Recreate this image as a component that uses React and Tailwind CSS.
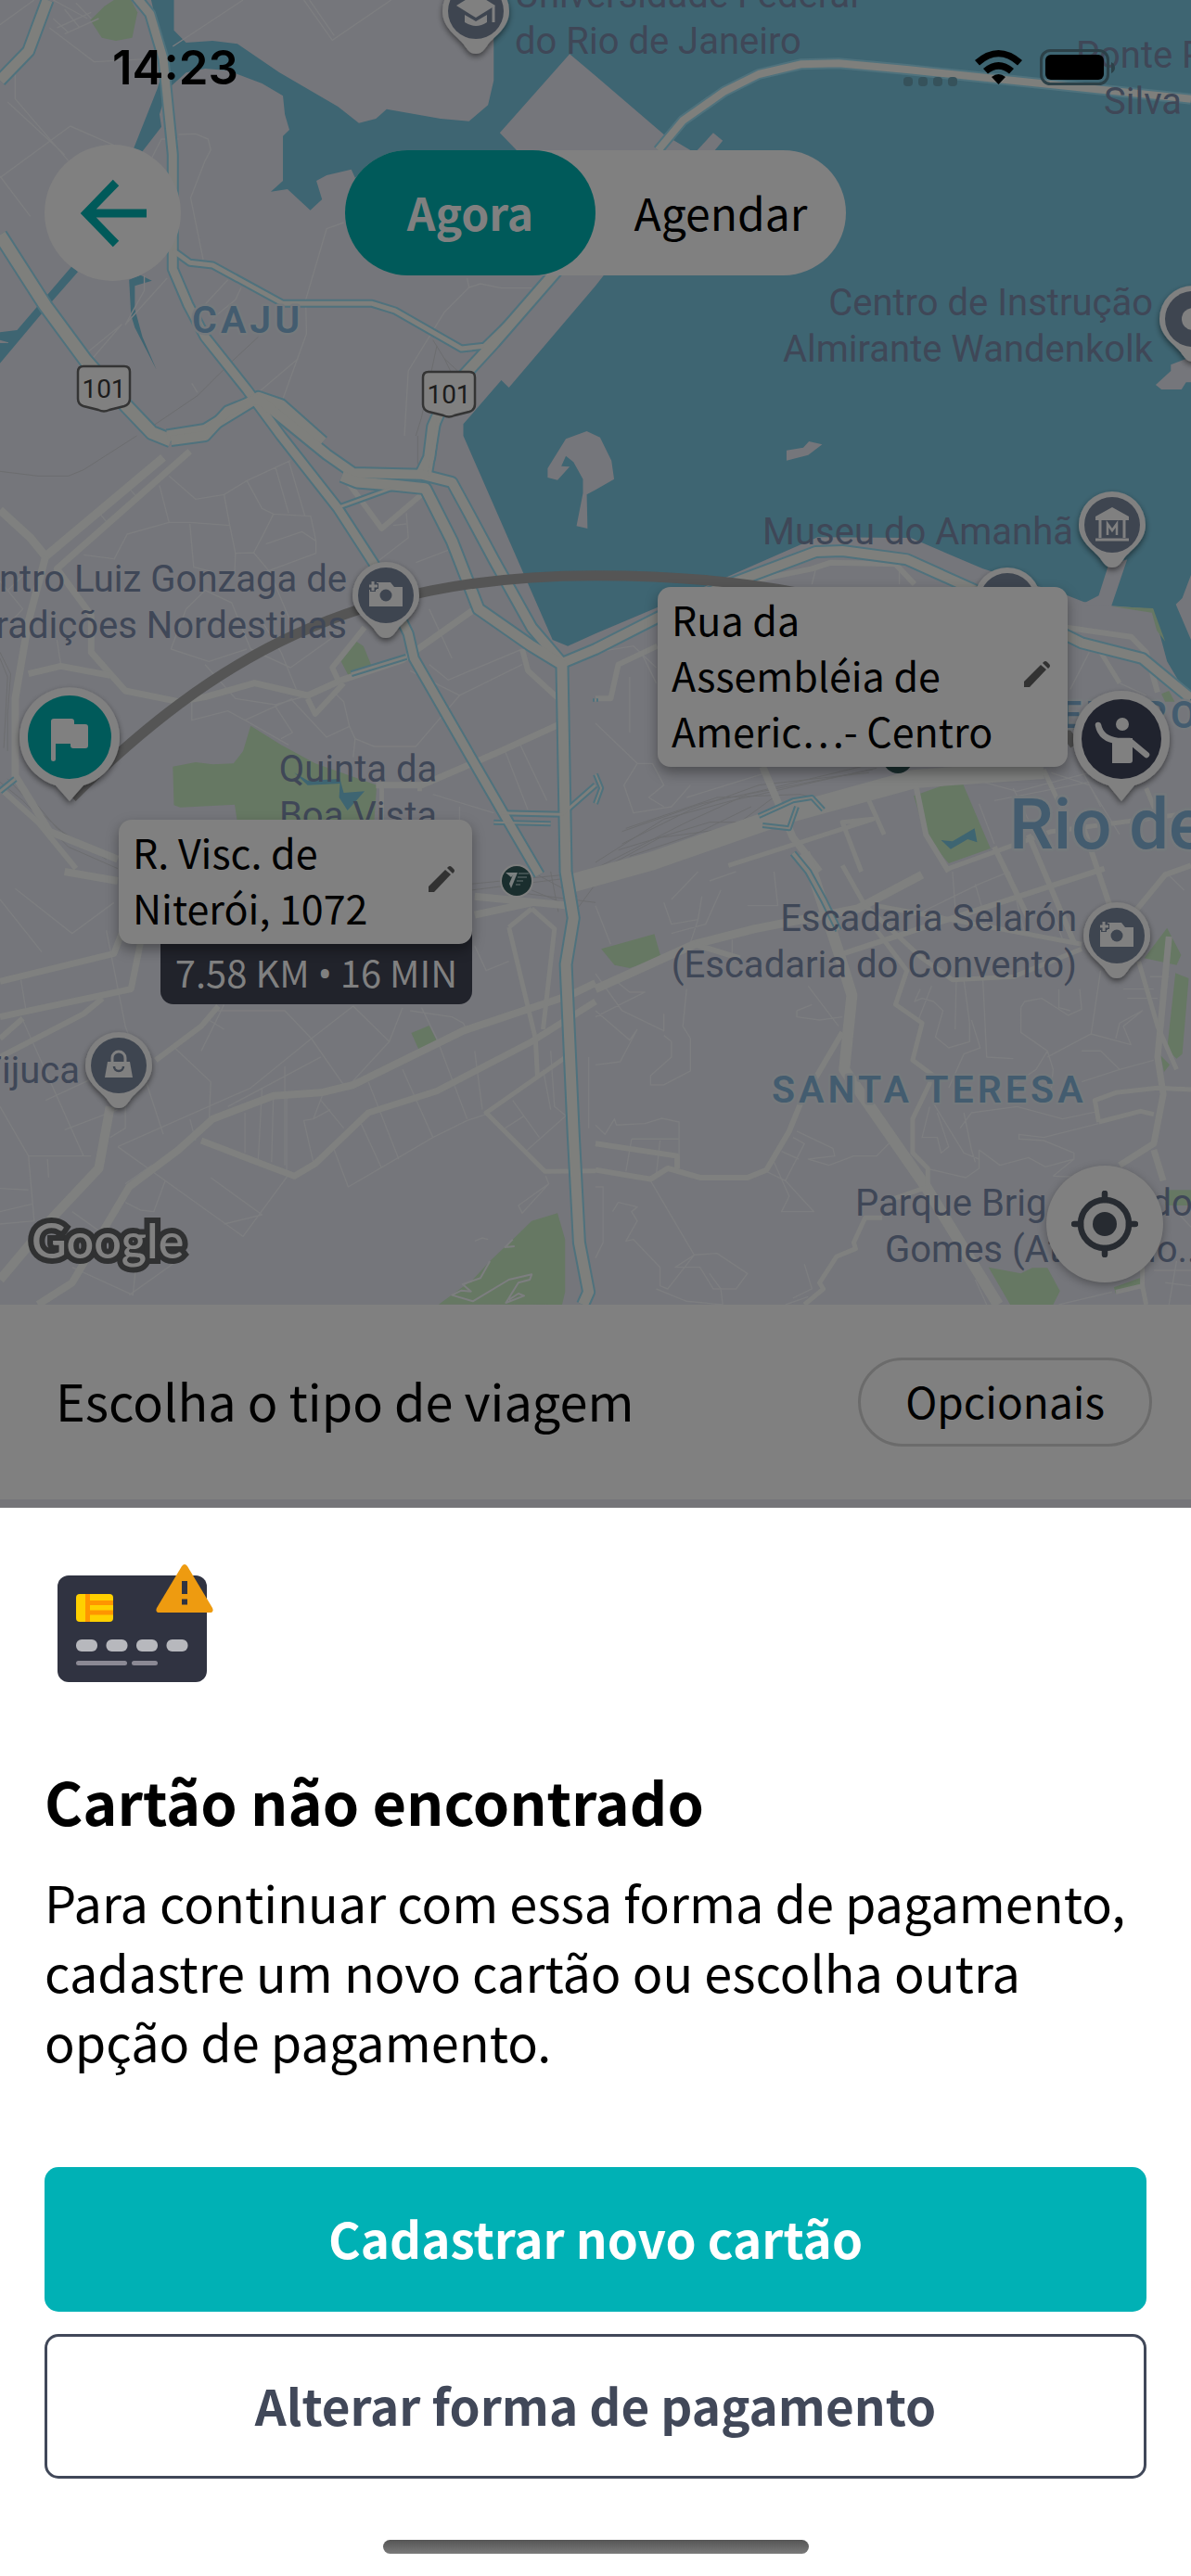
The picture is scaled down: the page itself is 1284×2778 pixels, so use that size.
import React from "react";

/* Map sheet units: every terrain layer is drawn on a grid of six tiles. */
const TILE = {
  nw: "translate(0 0)",
  ne: "translate(1568 0)",
  w: "translate(0 1410)",
  e: "translate(1568 1410)",
  sw: "translate(0 2820)",
  se: "translate(1568 2820)",
};

const WATER = [
  ["nw", "M398 0H458V98L490 138L560 132L625 142L735 234L890 345L945 398L990 384L1018 353L1160 384L1235 392L1285 340L1300 260V0H3136V2270L3073 2140L3036 1970L2926 1960L2853 1947L2808 1925L2588 1840L2398 1740L2153 1738L1731 1965L1568 2050L1495 2090L1455 2070L1220 1410V1372L1320 1230L1340 1254L1568 925L1590 890L1400 700L950 560L935 575L925 548L860 567L833 585L848 645L817 680L757 612L713 620L745 585V440L762 420L750 370L745 310L690 270L600 228L540 222L490 235L440 290L420 370L425 410L375 490L352 480L415 285L435 200Z"],
  ["nw", "M190 860L205 880L130 985L0 1175V1110H22V1108L0 1100V1075L45 1068Z"],
  ["nw", "M340 905L370 890L400 908L355 925V1000L375 1090L412 1196L355 1060L345 1020Z"],
];
const LAND = [
  ["nw", "M1316 430L1500 175L1568 245L1748 435L1818 486L1700 600H1450Z"],
  ["ne", "M268 486L310 430L335 455L305 500Z"],
  ["e", "M503 47L547 38L562 18L597 28L560 62L503 80Z"],
  ["w", "M1490 10L1545 -15L1580 5L1610 80L1617 140L1568 175L1545 190L1547 300L1518 292L1535 185V140L1510 85L1490 65L1478 98L1500 100L1468 143L1442 135V105Z"],
  ["e", "M1350 420L1400 400L1358 552L1280 545L1325 517Z"],
  ["e", "M1568 450L1545 525L1528 545L1568 660Z"],
  ["ne", "M1568 1155L1515 1180V1200L1475 1245L1490 1260H1543L1555 1237H1568Z"],
];
const GREEN = [
  ["nw", "M238 65L275 20L300 0H345L362 40L348 122L305 132L268 122Z"],
  ["w", "M898 730L938 665L957 680L977 740L918 777Z"],
  ["w", "M455 1070L515 1056L560 1063L615 1060L640 1020L660 938L740 1000L830 1060L992 1130L985 1250H625L618 1193L475 1202L458 1195Z"],
  ["e", "M838 1165L962 1110L1040 1335L930 1383L870 1295Z"],
  ["e", "M1360 552L1468 558L1500 665L1478 630L1465 572Z"],
  ["e", "M1490 835L1510 825L1525 860H1500Z"],
  ["e", "M448 1230L475 1225L470 1250L450 1255Z"],
  ["sw", "M1083 522L1130 498L1150 547L1103 577Z"],
  ["sw", "M1155 1400L1245 1320L1290 1260L1350 1190L1400 1130L1468 1105L1488 1190V1360L1480 1401Z"],
  ["se", "M15 250L155 202L173 280L90 312L50 302Z"],
  ["se", "M1445 280L1505 182L1542 270L1530 302Z"],
  ["se", "M1527 328L1562 345L1545 590L1530 605L1505 575Z"],
  ["se", "M1488 595L1512 625L1497 648Z"],
  ["se", "M1035 1280L1120 1300L1150 1282H1190L1223 1357L1205 1401H1092Z"],
  ["se", "M1365 1345L1440 1312V1345L1370 1365Z"],
  ["se", "M1500 1030H1568V1080H1500Z"],
];
const LAKES = [
  ["w", "M775 1090L810 1115L895 1110L905 1155L960 1150L915 1212L893 1170L895 1125L810 1130Z"],
  ["e", "M910 1308L940 1312L998 1270L1005 1315L980 1305L935 1337Z"],
];
const HIGHWAYS = [
  ["nw", "M125 0L75 165L0 260", 11],
  ["nw", "M345 -30L395 45L430 190L455 500V870L495 985L540 1090L650 1260L740 1410L890 1645L985 1825L1075 2050L1090 2130L1240 2450L1320 2620L1420 2830", 9],
  ["nw", "M0 760L120 990L225 1165L330 1310L400 1400L450 1425", 13],
  ["nw", "M455 810L500 850L560 858L745 982H980L1040 1005L1215 1128L1275 1120L1350 1030L1455 880", 5],
  ["nw", "M1470 870L1300 1110L1180 1270L1140 1380L1130 1480L1110 1530", 11],
  ["nw", "M440 1410L540 1390L680 1285L740 1310L850 1430", 11],
  ["ne", "M165 486L230 390L340 295L430 240L540 208L640 205L820 225L1568 320", 8],
  ["w", "M450 15L540 0L600 -80L680 -120L740 -60L860 60L930 120L1110 125L1190 150L1230 240L1300 400L1400 620L1480 735L1568 690L1728 590L1898 490L2148 375L2218 372L2388 400L2568 500L2848 670L3008 720L3136 850", 10],
  ["w", "M900 130L940 150L1040 160L1120 170L1190 340L1260 560L1400 680L1480 740L1490 1410L1510 1560L1490 1710L1510 2260L1525 2610L1550 2770L1535 2811", 11],
  ["w", "M895 230L1030 170", 3],
  ["w", "M1155 -60L1130 130", 4],
  ["w", "M925 770L1070 715", 3],
  ["w", "M1300 1250L1450 1255", 2],
  ["w", "M1320 1220L1480 1225L1568 1130", 3],
  ["w", "M0 1150L40 1110", 3],
  ["e", "M0 860V850M0 1190L15 1140L0 1095", 2],
  ["e", "M430 1230L520 1180L570 1170L600 1210M440 1260L510 1270L530 1200", 2],
  ["e", "M520 1350L560 1410L600 1500L640 1600", 4],
];
const ROADS = [
  ["w", "M430 70L120 390L80 330L0 240", 9],
  ["w", "M500 50L150 430L240 580V700L330 825L470 860L540 845L670 800L810 840L900 790L1060 725L1250 560", 7],
  ["w", "M120 390L75 600L40 850V1100L130 1280L310 1370", 8],
  ["w", "M75 770L160 745L290 775", 7],
  ["w", "M890 790L875 750L960 620", 6],
  ["w", "M810 850L830 900L905 800", 6],
  ["w", "M910 140L1005 300L1110 190", 6],
  ["w", "M990 1130H1110L1300 1030L1470 935", 7],
  ["w", "M1375 690L1390 760L1470 850", 6],
  ["w", "M1005 1120V1250M1105 1130V1150", 5],
  ["w", "M0 1140L100 1250L200 1400", 6],
  ["sw", "M0 355L300 265L320 200", 7],
  ["sw", "M0 470L345 380L370 230", 7],
  ["sw", "M0 600L220 460L270 410M0 540L60 475", 6],
  ["sw", "M575 435L530 500L410 610", 6],
  ["sw", "M290 760L260 960L130 1130L0 1320", 10],
  ["sw", "M100 1401L190 1330L340 1020L470 900L560 800L720 725L845 715L930 690L1220 515L1500 400L1568 360", 8],
  ["sw", "M530 870L700 950L775 985L830 945L970 780L1150 710L1400 550L1568 420", 7],
  ["sw", "M1340 180L1410 540L1415 660M1400 120L1460 185L1430 510M1340 180L1400 120", 5],
  ["sw", "M1490 600L1280 780L1435 970L1568 968", 5],
  ["sw", "M1250 80L1500 110M1250 140L1400 100", 8],
  ["sw", "M170 0L310 30", 8],
  ["e", "M-70 1450L150 1375L500 1225L840 1110L1180 1080", 20],
  ["e", "M440 1070L520 1300L590 1410", 8],
  ["se", "M550 -60L570 0L640 260L675 400L655 640L870 1020L1060 1401", 12],
  ["se", "M0 380L260 235L420 185L690 120L860 10", 9],
  ["se", "M260 235L380 280M640 270L1340 -10", 6],
  ["se", "M650 -20L710 110L860 280L940 350L1100 340L1280 250", 5],
  ["se", "M740 110L1280 235", 5],
  ["se", "M740 190L820 320L790 430L860 490L835 610L890 660L835 800V910L875 960V1020L780 1060", 5],
  ["se", "M650 520L540 750L510 840L450 965L400 990H275L190 960L145 995L0 965", 6],
  ["se", "M0 880L215 920V960", 6],
  ["se", "M755 1120H710L680 1200L685 1220L635 1245L590 1330L600 1350L550 1401", 5],
  ["se", "M1510 210L1480 600L1495 720L1470 880L1380 950M1470 900L1495 1000", 7],
  ["e", "M1050 1330L1140 1560M1140 1290L1260 1640M1280 1250L1365 1560", 6],
  ["se", "M1400 160L1500 10L1568 -20", 6],
  ["se", "M1430 290L1480 500L1530 640M1325 810L1315 740L1370 715L1480 700L1568 705", 5],
  ["se", "M1325 810L1435 775L1470 785M1370 1360L1440 1340L1450 1401M1440 1350V1250", 5],
  ["e", "M840 1110L870 1290L930 1410", 6],
  ["e", "M0 850H40L60 740L163 680", 6],
  ["e", "M370 480L570 430L620 410L790 415L840 480", 6],
  ["e", "M350 1390L730 1240L650 1250L700 1410M720 1180L760 1290", 5],
  ["e", "M1240 620L1410 650L1450 700L1480 830", 6],
  ["e", "M1180 1080L1240 1240M930 1400L1200 1280L1568 1220M1320 680L1380 800M1450 1140L1490 1260", 5],
];
const STREETS = [
  ["nw", "M0 80L90 0M140 0L230 60M150 90L240 40M170 110L260 60M140 60L180 105M170 30L210 90M200 10L240 60M130 90L248 200L400 190M100 60L40 230V320L180 520M0 575L185 408L310 475M80 700L0 570M20 330L170 500"],
  ["nw", "M455 150L640 0M800 0L875 130L1030 0M815 0L880 115M470 435L515 433L548 450L555 485L540 520L502 640L535 840M400 510L425 450L470 450M600 905L540 985M635 930L620 970L560 1030M905 720L860 740L805 970L807 1080L745 1290M1230 900L1235 930L1170 1010L1075 1200L1065 1410M1235 930L1265 918L1320 932H1400M230 1140L320 1050L240 1165M380 890V940L330 1050L440 900M785 1160L680 1270M520 1270L505 1240"],
  ["w", "M445 130L515 205L590 190L650 145L765 80M650 145L690 235L720 253L818 260L832 340V380L700 440M590 190L605 290L620 380L618 440M420 160L445 280L335 318L300 400M445 280H500L605 290M500 285L510 425L560 440M620 380L668 378L693 320L720 253M700 350L795 310L832 340M668 378L710 440L765 600M340 170L365 205M265 255L285 285M725 100L760 250M760 80L803 260M1070 250L1075 330L980 420M1035 290L1070 285M1095 410L1180 370"],
  ["w", "M450 690L490 560L540 500L610 540L660 690L765 750L890 640M450 690L550 730L650 690M540 740L620 850L725 870L810 840M505 840V920L600 890L645 920L770 850M645 920L760 1000M725 875L770 960L740 980M765 850L860 975L920 940L905 860L880 830M690 600L740 700L780 820M0 470L60 560L30 600M20 500L70 440M930 1040L935 980L985 1005H1095L1210 840L1375 740M935 980L920 940M1130 740L1180 790L1375 690M1080 760L1210 840M1330 1020L1390 1210M1370 1000L1440 1180M1210 1200V1300M1140 1160L1300 1220M220 385L300 398M150 660L160 740M1130 560L1190 720"],
  ["sw", "M0 90L110 260M40 55L190 200L300 100M55 350L70 460M280 190L330 500L390 700L430 850M60 480L220 920M0 760L75 920H240M75 920L90 1130L0 1140M125 930L128 990M120 740L330 620M170 835L310 770M330 760V830L290 860M560 450L750 450L820 540L905 690M930 435L820 540L660 700L420 830L310 890M930 435L1025 550L920 690M1025 550L1060 440M1080 450L1190 470L1220 490L1230 515M1110 440L1150 540L1230 800M460 570L555 680L550 820M550 480L590 510M590 430L530 580M750 630V950M690 700L680 930M645 780V910M720 720L715 940M755 720V980M845 600L600 760M850 720L825 800L800 805L825 940M845 740L905 830M825 800L870 770"],
  ["sw", "M970 680L1050 930M1060 640L1140 860M945 800L1005 960M880 900L917 1020L1140 860L1230 805L1280 785M917 1020M310 890L640 1180L760 980M555 990L690 1110L590 1140M435 1000L405 1100L370 1095L330 1070M330 1010L400 950M500 800L515 870M190 1100L360 1250L350 1370L190 1280M0 1025L75 1030M0 1100L85 1075M1350 740L1420 860M1330 830L1380 790M1380 910L1490 790M1450 580L1460 760L1490 790M1430 640L1450 770M1437 985L1445 1010L1365 1080L1375 1105L1445 1010M1250 1195L1270 1185L1285 1190M340 1370L500 1230M1550 600V830M1250 240L1280 320L1340 290M1250 580L1270 770"],
  ["e", "M0 700L100 680L160 750M90 780V960M120 700L160 800M0 930L110 1060L75 1130L100 1220L200 1200L250 1130M110 1060L150 1060L180 1130L140 1170L180 1200M240 1170L450 1090M800 420V480M580 430L570 480M1300 700L1250 820M1380 800L1450 840M1010 1190L1050 1320M1100 1140L1170 1320M1200 1090L1300 1130L1380 1290M1280 1080L1330 1200M960 1100L1110 1150L1300 1090M720 1180L740 1120L850 1090M1050 1180L1300 1120"],
  ["se", "M0 110L40 235M200 90L270 0M180 100L200 170L270 155L280 80M270 155L250 230M330 60L290 170L200 200M370 0L300 30M360 220V280M470 0L480 110L400 110M940 0L950 160M1000 40L1030 170M860 130L1010 40L1090 0M1090 0L1130 200M900 170L1180 60M1200 120L1230 220M950 350L947 510M970 350L985 490V550L930 570L895 535L915 450L890 420L860 410L840 420L855 380M1020 350L1030 600L1100 605M885 370L850 480M990 480L1013 570L970 590L930 700M1120 440L1130 420L1175 410L1245 465L1280 445L1275 380M1120 440V520L1190 580L1160 640L1100 690M1190 580L1205 640L1200 700M1330 320L1305 525L1190 600M1305 525L1410 560L1390 500L1440 450L1380 490L1370 540M1280 580H1330L1380 640L1470 610M1380 640L1280 680M1220 380V440L1250 450"],
  ["se", "M0 330L70 450L180 515V460M110 510L65 615L0 625M180 530L200 550V600L145 660V690L180 690L250 645V540L230 500L240 380M0 470L130 390L90 390L50 350M0 450L90 545L110 510M0 820L25 850L50 800L55 820L130 815L175 798L220 810V920M95 865L220 865M95 865L80 970M170 870L160 980M530 840L625 895L630 920L560 930L615 950L680 920H740L780 870M520 860L550 880L500 1000L450 970M500 1000L575 1100H490L510 1050L470 940M490 905L535 930M145 1000L260 1240L320 1235L400 1300L370 1350L310 1350L275 1280H210L260 1240M260 1240L190 1350L170 1340V1280L100 1190L80 1195L110 1130L95 1100L110 1085L60 1070L45 1100M0 1020H20V1200L0 1250M880 760L860 860L900 860L910 910L930 890L900 780M890 750L970 910L1010 930M970 780L990 900L1000 940M960 830L990 780L1110 760L1230 800L1325 775"],
  ["se", "M1010 900L1065 950L1140 925L1185 955L1260 930V910L1180 870L1115 865V850L1180 860L1325 815M1205 985L1260 930M1205 985L1300 990M870 960L975 990L1010 960V900M530 450V470L590 480L650 470M530 450L570 430M560 370L640 500M1220 1401L1360 1360M1500 0L1550 60M1460 340H1510M1400 410H1480M1390 380L1470 380M1530 1100L1568 1150M1470 1290H1568M1500 1330L1568 1340M1530 1260L1510 1401M500 1401L560 1375M550 1270L570 1350L520 1380M1000 1320L1030 1401M160 1350L240 1390L335 1401L330 1350L300 1300"],
];
const TRAILS = [
  ["sw", "M1350 1190L1330 1215L1355 1212M1290 1260L1265 1315L1218 1335L1240 1358L1215 1355L1190 1370L1245 1390L1340 1320L1400 1303L1395 1320L1365 1330L1332 1395L1380 1372L1365 1365L1340 1385"],
];
const RAILS = [
  ["w", "M0 115L100 130H180L220 110L360 0"],
  ["nw", "M680 1090L610 1170L520 1280L400 1380M1140 1100L1170 1160L1190 1210M1150 1120L1110 1350L1095 1410M1170 1160L1205 1200M1100 1410V1500L1120 1530"],
  ["w", "M0 720L20 780L10 1010M0 700L28 770L20 900V1020M0 1120L60 1180L180 1330L310 1400M20 1110L90 1200L200 1320L300 1370M40 1110L150 1270L280 1370"],
  ["e", "M70 1280L280 1190L430 1150L700 1070M80 1270L320 1170L540 1160L610 1180M0 1380L180 1240L360 1180L740 1075M70 1320L250 1210L430 1130L720 1090M60 1340L300 1250L380 1250L480 1160M100 1400L350 1280L430 1240M0 1400L240 1250L400 1160L730 1080M20 1400L170 1300L350 1270M90 1360L260 1290L410 1200"],
  ["sw", "M1240 40L1568 0M1240 60L1568 10M1380 70L1568 100M1400 60L1520 120L1568 40M1450 0L1470 130M1400 0L1520 80"],
];

const Fill = ({ list, color }) =>
  list.map(([t, d], i) => <path key={i} transform={TILE[t]} d={d} fill={color} />);
const Line = ({ list, color, width = 0, extra = 0 }) =>
  list.map(([t, d, w], i) => (
    <path key={i} transform={TILE[t]} d={d} fill="none" stroke={color} strokeWidth={(w || width) + extra}
      strokeLinejoin="round" strokeLinecap="butt" vectorEffect="non-scaling-stroke" />
  ));

const Poi = ({ x, y, children }) => (
  <g transform={`translate(${x} ${y})`}>
    <path d="M0 46C-6 46 -9 42 -13 36C-20 27 -36 18 -36 0A36 36 0 1 1 36 0C36 18 20 27 13 36C9 42 6 46 0 46Z" fill="#808080" filter="url(#soft)" />
    <circle r="30" fill="#3e4550" />
    {children}
  </g>
);
const Camera = () => (
  <g>
    <path d="M-18 12V-6H-10V-14H5L9 -9H18V12Z" fill="#808080" />
    <circle r="6.500" cy="0" fill="#3e4550" />
    <path d="M-14 -16V-4M-19 -10H-8" stroke="#3e4550" strokeWidth="6" />
    <path d="M-14 -15V-5M-18 -10H-9" stroke="#808080" strokeWidth="3" />
  </g>
);
const Shield = ({ x, y }) => (
  <g transform={`translate(${x} ${y})`}>
    <path d="M-22 -24H22Q28 -24 28 -18V11Q28 17 22 19L6 23Q0 26 -6 23L-22 19Q-28 17 -28 11V-18Q-28 -24 -22 -24Z" fill="#808080" stroke="#343434" strokeWidth="2.500" />
    <text y="10" textAnchor="middle" fontSize="28" fill="#1c1c1c">101</text>
  </g>
);

const PLACE_LABELS = [
  [555, 8, "start", "Universidade Federal"],
  [555, 58, "start", "do Rio de Janeiro"],
  [1160, 73, "start", "Ponte Pres."],
  [1190, 123, "start", "Silva"],
  [1243, 340, "end", "Centro de Instrução"],
  [1243, 390, "end", "Almirante Wandenkolk"],
  [374, 638, "end", "Centro Luiz Gonzaga de"],
  [374, 688, "end", "Tradições Nordestinas"],
  [1157, 587, "end", "Museu do Amanhã"],
  [386, 843, "middle", "Quinta da"],
  [386, 893, "middle", "Boa Vista"],
  [1161, 1004, "end", "Escadaria Selarón"],
  [1161, 1054, "end", "(Escadaria do Convento)"],
  [86, 1168, "end", "Tijuca"],
  [922, 1311, "start", "Parque Brig Eduardo"],
  [954, 1361, "start", "Gomes (Aterro do..."],
];

function CityMap() {
  return (
    <svg className="absolute inset-0 h-full w-full bg-[#75767b] font-['Roboto',sans-serif]" viewBox="0 0 1284 1407" preserveAspectRatio="xMidYMin slice" role="img" aria-label="Mapa do Rio de Janeiro">
      <defs>
        <filter id="soft" x="-30%" y="-30%" width="160%" height="160%">
          <feDropShadow dx="0" dy="3" stdDeviation="3" floodColor="#000" floodOpacity="0.5" />
        </filter>
      </defs>
      <g transform="scale(0.40944 0.33333)">
        <Fill list={WATER} color="#3e6572" />
        <Fill list={LAND} color="#75767b" />
        <Fill list={GREEN} color="#667863" />
        <Fill list={LAKES} color="#3e6572" />
        <Line list={RAILS} color="#6c6d6f" width={1} />
        <Line list={STREETS} color="#7d7e80" width={1} extra={0.4} />
        <Line list={TRAILS} color="#7d7e80" width={2} />
        <Line list={ROADS} color="#7f807f" />
        <Line list={HIGHWAYS} color="#4f727d" extra={4} />
        <Line list={HIGHWAYS} color="#7e7f7c" extra={0} />
        <path d="M190 2580C560 2130 930 1862 1568 1862C2100 1862 2600 2000 2830 2410" fill="none" stroke="#555" strokeWidth="11" vectorEffect="non-scaling-stroke" />
      </g>

      <Shield x={112} y={419} />
      <Shield x={484} y={425} />

      <g fontSize="40" fill="#3f4757">
        {PLACE_LABELS.map(([x, y, anchor, text]) => (
          <text key={text} x={x} y={y} textAnchor={anchor}>{text}</text>
        ))}
      </g>
      <g fontSize="41" fontWeight="600" fill="#435c6f" stroke="#75797c" strokeWidth="5" strokeLinejoin="round" paintOrder="stroke" className="tracking-widest">
        <text x="207" y="359">CAJU</text>
        <text x="832" y="1189">SANTA TERESA</text>
        <text x="1112" y="785">CENTRO</text>
      </g>
      <text x="1088" y="915" fontSize="76" fontWeight="500" fill="#435c6f" stroke="#75797c" strokeWidth="6" strokeLinejoin="round" paintOrder="stroke">Rio de Janeiro</text>

      <Poi x={513} y={12}>
        <path d="M-21 -6L0 -19L21 -6L0 7Z" fill="#808080" />
        <path d="M-12 4L0 11L12 4V12Q0 20 -12 12Z" fill="#808080" />
        <path d="M19 -6V12" stroke="#808080" strokeWidth="3" />
      </Poi>
      <Poi x={1286} y={344}><circle r="12" fill="#808080" /></Poi>
      <Poi x={1086} y={648}><path d="M-11 -15V10M0 -15V10M11 -15V10" stroke="#808080" strokeWidth="6" /></Poi>
      <Poi x={1199} y={566}>
        <path d="M-18 -5V-9L0 -19L18 -9V-5Z" fill="#808080" />
        <path d="M-13 -6V14M13 -6V14M-18 16H18" stroke="#808080" strokeWidth="3" />
        <path d="M-5 11V-1L0 6L5 -1V11" fill="none" stroke="#808080" strokeWidth="2.500" />
      </Poi>
      <Poi x={416} y={642}><Camera /></Poi>
      <Poi x={1204} y={1009}><Camera /></Poi>
      <Poi x={128} y={1149}>
        <path d="M-12 -4H12L15 13H-15Z" fill="#808080" />
        <path d="M-7 -4V-8A7 7 0 0 1 7 -8V-4" fill="none" stroke="#808080" strokeWidth="3" />
        <path d="M-5 1A5 5 0 0 0 5 1" fill="none" stroke="#3e4550" strokeWidth="2.500" />
      </Poi>

      <g>
        <circle cx="557" cy="950" r="18" fill="#808080" />
        <circle cx="557" cy="950" r="16" fill="#1a2e2e" />
        <path d="M545 941H556L551 946Z" fill="#7b8080" />
        <path d="M558 941L551 958L549 953L554 941Z" fill="#7b8080" />
        <path d="M559 942H570M558 946H568M557 950H564M556 954H561" stroke="#4d5c5c" strokeWidth="1.500" />
        <circle cx="968" cy="818" r="16" fill="#1a2e2e" />
      </g>

      <g transform="translate(75 795)">
        <path d="M0 69L-15 52A54 54 0 1 1 15 52Z" fill="#808080" filter="url(#soft)" />
        <circle r="45" fill="#005a5a" />
        <path d="M-20 -17Q-20 -20 -17 -20H2Q5 -20 5 -17V-14H17Q20 -14 20 -11V9Q20 12 17 12H4Q1 12 1 9V7H-15V24Q-15 26 -17.500 26T-20 24Z" fill="#808080" />
      </g>
      <g transform="translate(1209 797)">
        <path d="M0 67L-14 50A52 52 0 1 1 14 50Z" fill="#808080" filter="url(#soft)" />
        <circle r="43" fill="#20232e" />
        <circle cx="1" cy="-16" r="7" fill="#808080" />
        <path d="M-25 -15Q-22 0 -4 2H9L27 17" fill="none" stroke="#808080" strokeWidth="6.500" strokeLinecap="round" strokeLinejoin="round" />
        <path d="M-10 -1H12V23Q12 26 9 26H-10Z" fill="#808080" />
      </g>

      <text x="34" y="1357" fontSize="52" fontWeight="600" fill="#808080" stroke="#303132" strokeWidth="12" paintOrder="stroke" className="font-['Lato',sans-serif]">Google</text>
    </svg>
  );
}

const Pencil = () => (
  <svg className="h-[30px] w-[30px] shrink-0" viewBox="0 0 30 30" aria-hidden="true">
    <path d="M1 23L19 5L25 10L7 29H1Z" fill="#323232" />
    <path d="M21 3L22 2Q24 0 26 2L28 4Q30 6 28 8L27 9Z" fill="#323232" />
  </svg>
);

function StatusBar() {
  return (
    <div className="flex items-center justify-between pt-[43px] pr-[82px] pl-[121px] text-black">
      <span className="font-['Inter',sans-serif] text-[51px] leading-[60px] font-semibold">14:23</span>
      <div className="flex items-center gap-[19px]">
        <svg className="h-[10px] w-[58px] self-end" viewBox="0 0 58 10" aria-hidden="true">
          {[0, 16, 32, 48].map((x) => <rect key={x} x={x} width="10" height="10" rx="4" fill="#36525b" />)}
        </svg>
        <svg className="h-[38px] w-[51px]" viewBox="0 0 51 38" aria-hidden="true">
          <path d="M0 11Q25.500 -11 51 11L46 16.500Q25.500 -2 5 16.500ZM9 20Q25.500 6 42 20L37 25.500Q25.500 16 14 25.500ZM18 29Q25.500 23 33 29L25.500 37Z" fill="#000" />
        </svg>
        <svg className="h-10 w-[81px]" viewBox="0 0 81 40" aria-hidden="true">
          <rect x="1.500" y="1.500" width="72" height="36" rx="10" fill="none" stroke="#2c4148" strokeWidth="3" />
          <rect x="6" y="6" width="63" height="27" rx="6" fill="#000" />
          <path d="M77 14Q81 16 81 20T77 26Z" fill="#2c4148" />
        </svg>
      </div>
    </div>
  );
}

function AddressCard({ lines, className }) {
  return (
    <button type="button" className={"absolute flex items-center justify-between rounded-[14px] bg-[#808080] pt-1 pr-[18px] pb-2.5 text-left text-[43px] leading-[60px] text-black shadow-[0_6px_14px_rgba(0,0,0,0.35)] " + className}>
      <span>
        {lines.map((line) => <span key={line} className="block whitespace-nowrap">{line}</span>)}
      </span>
      <Pencil />
    </button>
  );
}

function MapArea() {
  return (
    <section className="relative min-h-[1200px] flex-1 overflow-hidden">
      <CityMap />
      <div className="relative">
        <StatusBar />
        <nav className="relative mt-[53px] flex h-[147px] items-center justify-center">
          <button type="button" aria-label="Voltar" className="absolute left-12 flex h-[147px] w-[147px] items-center justify-center rounded-full bg-[#808080]">
            <svg className="h-[74px] w-[72px]" viewBox="0 0 72 74" fill="none" stroke="#005a5a" strokeWidth="9" aria-hidden="true">
              <path d="M72 37H7M39 4L7 37L39 70" />
            </svg>
          </button>
          <div className="flex h-[135px] w-[540px] rounded-full bg-[#808080] text-[48px] leading-[60px]">
            <button type="button" className="flex-1 rounded-full bg-[#005a5a] pb-1 font-bold text-[#808080]">Agora</button>
            <button type="button" className="flex-1 pb-1 text-black">Agendar</button>
          </div>
        </nav>
      </div>
      <div className="absolute top-[980px] left-[173px] flex h-[103px] w-[336px] items-end justify-center rounded-[14px] bg-[#21232b] text-[40px] text-[#808080]">
        <p className="leading-[66px] whitespace-nowrap">7.58 KM <span className="font-['Noto_Sans',sans-serif]">•</span> 16 MIN</p>
      </div>
      <AddressCard className="top-[633px] right-[133px] w-[442px] pl-[15px]" lines={["Rua da", "Assembléia de", "Americ…- Centro"]} />
      <AddressCard className="top-[884px] left-32 w-[381px] pl-[15px]" lines={["R. Visc. de", "Niterói, 1072"]} />
      <button type="button" aria-label="Minha localização" className="absolute right-[30px] bottom-6 flex h-[126px] w-[126px] items-center justify-center rounded-full bg-[#808080] shadow-[0_3px_10px_rgba(0,0,0,0.3)]">
        <svg className="h-[72px] w-[72px]" viewBox="0 0 72 72" fill="none" stroke="#272b31" strokeWidth="6.500" strokeLinecap="round" aria-hidden="true">
          <circle cx="36" cy="36" r="26" />
          <circle cx="36" cy="36" r="13" fill="#272b31" stroke="none" />
          <path d="M36 3V10M36 62V69M3 36H10M62 36H69" />
        </svg>
      </button>
    </section>
  );
}

const CardAlert = () => (
  <svg className="ml-[14px] h-32 w-[168px]" viewBox="0 0 168 128" aria-hidden="true">
    <rect y="12" width="161" height="115" rx="12" fill="#303341" />
    <rect x="20" y="32" width="40" height="30" rx="4" fill="#ffd000" />
    <path d="M32.500 32V62M35 41.500H60M35 52H60" stroke="#ff9500" strokeWidth="5" />
    {[20, 52.500, 85, 117.500].map((x) => <rect key={x} x={x} y="81" width="23" height="13" rx="6" fill="#b7b8bd" />)}
    <rect x="20" y="104" width="55" height="5" rx="2.500" fill="#8b8994" />
    <rect x="80" y="104" width="28" height="5" rx="2.500" fill="#8b8994" />
    <path d="M134 2Q137 -2 140 2L167 47Q169 52 164 52H110Q105 52 107 47Z" fill="#ee9b10" />
    <path d="M137 18V32M137 37.500V43.500" stroke="#303341" strokeWidth="6" />
  </svg>
);

export default function App() {
  return (
    <main className="flex min-h-screen flex-col bg-white font-['Noto_Sans_CJK_SC','Noto_Sans_CJK_JP',sans-serif]">
      <MapArea />
      <section className="flex h-[219px] items-center justify-between border-b-9 border-[#757579] bg-[#808080] pr-[42px] pl-[60px] text-black">
        <h1 className="pb-1 text-[54px] leading-[72px]">Escolha o tipo de viagem</h1>
        <button type="button" className="h-24 rounded-full border-3 border-[#6b6b6b] px-12 pb-1 text-[46px] leading-[60px]">Opcionais</button>
      </section>
      <section role="dialog" aria-labelledby="card-title" className="bg-white px-12 pt-[61px] pb-6">
        <CardAlert />
        <h2 id="card-title" className="mt-[87px] text-[63px] leading-[80px] font-bold text-black">Cartão não encontrado</h2>
        <p className="mt-[31px] text-[54px] leading-[75px] text-black">
          Para continuar com essa forma de pagamento, cadastre um novo cartão ou escolha outra opção de pagamento.
        </p>
        <div className="mt-[99px] flex flex-col gap-6 text-[53px] leading-[75px] font-bold">
          <button type="button" className="h-[156px] rounded-[15px] bg-[#00b1b5] pb-1 text-white">Cadastrar novo cartão</button>
          <button type="button" className="h-[156px] rounded-[15px] border-3 border-[#414859] pb-1 text-[#414859]">Alterar forma de pagamento</button>
        </div>
        <div className="mx-auto mt-[66px] h-[15px] w-[459px] rounded-full bg-linear-to-b from-[#555] to-[#7a7a7a]" />
      </section>
    </main>
  );
}
